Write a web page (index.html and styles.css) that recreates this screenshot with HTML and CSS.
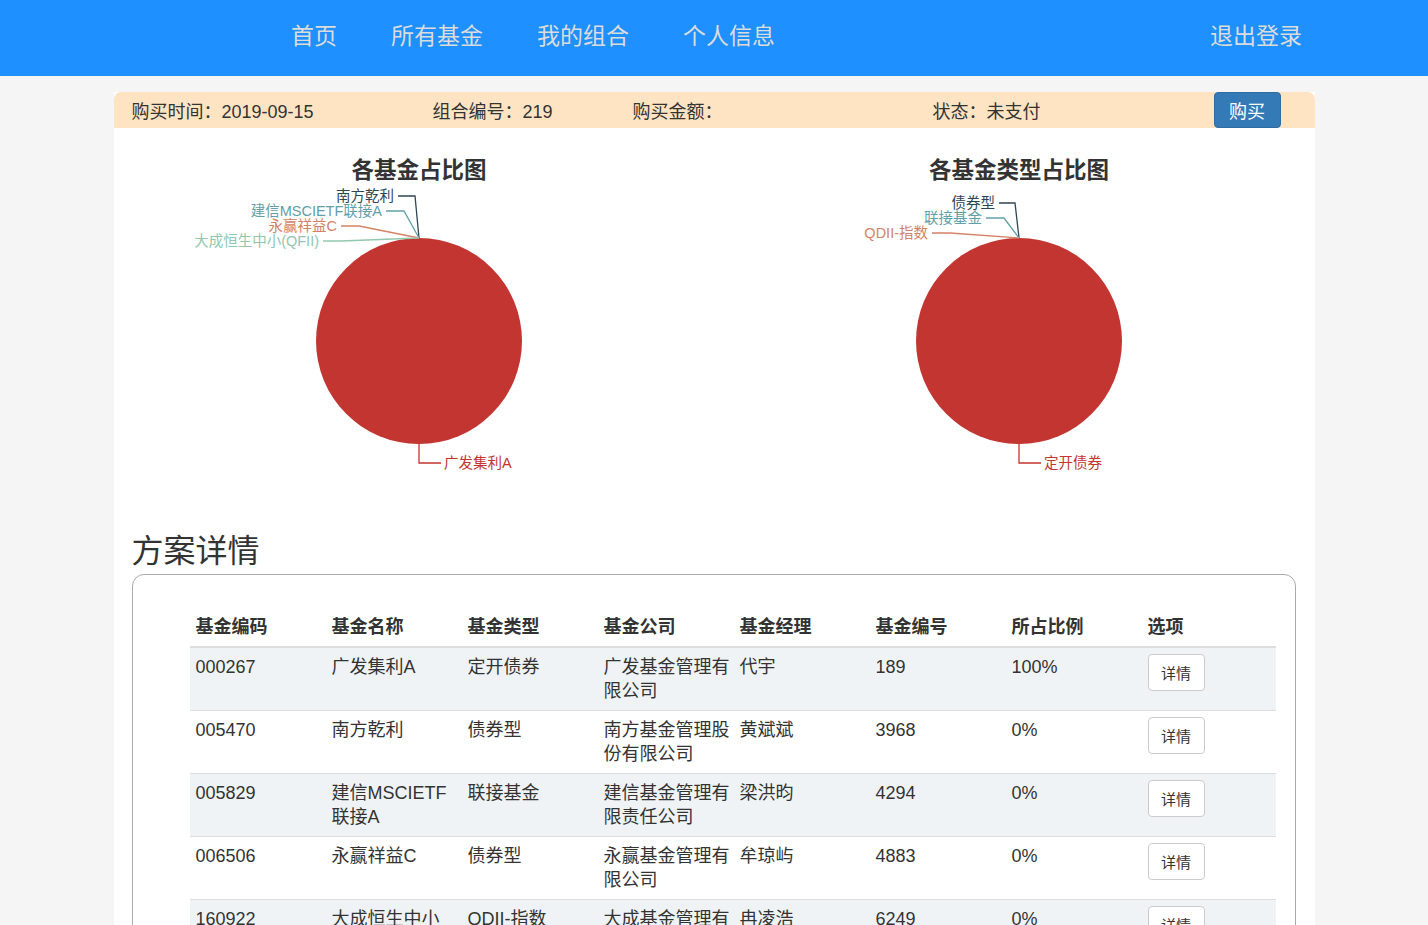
FILE: index.html
```html
<!DOCTYPE html>
<html lang="zh-CN">
<head>
<meta charset="utf-8">
<title>我的组合</title>
<link rel="stylesheet" href="styles.css">
</head>
<body>
<nav class="topnav">
  <ul class="nav-links">
    <li><a href="#">首页</a></li>
    <li><a href="#">所有基金</a></li>
    <li><a href="#">我的组合</a></li>
    <li><a href="#">个人信息</a></li>
  </ul>
  <a class="logout" href="#">退出登录</a>
</nav>

<main class="page">
  <div class="info-bar">
    <span>购买时间：2019-09-15</span>
    <span>组合编号：219</span>
    <span>购买金额：</span>
    <span>状态：未支付</span>
    <button class="buy-btn">购买</button>
  </div>

  <section class="charts">
    <svg class="chart" width="600" height="400" viewBox="0 0 600 400">
      <text class="chart-title" x="300" y="50" text-anchor="middle">各基金占比图</text>
      <circle cx="300" cy="213" r="103" fill="#c23531"/>
      <polyline class="lbl-line" points="279,68 296,68 300,110" stroke="#2f4554"/>
      <polyline class="lbl-line" points="267,83 285,83 300,110" stroke="#61a0a8"/>
      <polyline class="lbl-line" points="222,98 240,98 300,110" stroke="#d48265"/>
      <polyline class="lbl-line" points="204,113 222,113 300,110" stroke="#91c7ae"/>
      <polyline class="lbl-line" points="300,316 300,335 322,335" stroke="#c23531"/>
      <text class="lbl" x="275" y="68" text-anchor="end" fill="#2f4554">南方乾利</text>
      <text class="lbl" x="263" y="83" text-anchor="end" fill="#61a0a8">建信MSCIETF联接A</text>
      <text class="lbl" x="218" y="98" text-anchor="end" fill="#d48265">永赢祥益C</text>
      <text class="lbl" x="200" y="113" text-anchor="end" fill="#91c7ae">大成恒生中小(QFII)</text>
      <text class="lbl" x="325" y="335" fill="#c23531">广发集利A</text>
    </svg>
    <svg class="chart" width="600" height="400" viewBox="0 0 600 400">
      <text class="chart-title" x="300" y="50" text-anchor="middle">各基金类型占比图</text>
      <circle cx="300" cy="213" r="103" fill="#c23531"/>
      <polyline class="lbl-line" points="280,75 296,75 300,110" stroke="#2f4554"/>
      <polyline class="lbl-line" points="267,90 285,90 300,110" stroke="#61a0a8"/>
      <polyline class="lbl-line" points="213,105 231,105 300,110" stroke="#d48265"/>
      <polyline class="lbl-line" points="300,316 300,335 322,335" stroke="#c23531"/>
      <text class="lbl" x="276" y="75" text-anchor="end" fill="#2f4554">债券型</text>
      <text class="lbl" x="263" y="90" text-anchor="end" fill="#61a0a8">联接基金</text>
      <text class="lbl" x="209" y="105" text-anchor="end" fill="#d48265">QDII-指数</text>
      <text class="lbl" x="325" y="335" fill="#c23531">定开债券</text>
    </svg>
  </section>

  <h2 class="section-title">方案详情</h2>

  <div class="table-panel">
    <table class="fund-table">
      <thead>
        <tr>
          <th>基金编码</th><th>基金名称</th><th>基金类型</th><th>基金公司</th><th>基金经理</th><th>基金编号</th><th>所占比例</th><th>选项</th>
        </tr>
      </thead>
      <tbody>
        <tr>
          <td>000267</td><td>广发集利A</td><td>定开债券</td><td>广发基金管理有限公司</td><td>代宇</td><td>189</td><td>100%</td><td><button class="detail-btn">详情</button></td>
        </tr>
        <tr>
          <td>005470</td><td>南方乾利</td><td>债券型</td><td>南方基金管理股份有限公司</td><td>黄斌斌</td><td>3968</td><td>0%</td><td><button class="detail-btn">详情</button></td>
        </tr>
        <tr>
          <td>005829</td><td>建信MSCIETF联接A</td><td>联接基金</td><td>建信基金管理有限责任公司</td><td>梁洪昀</td><td>4294</td><td>0%</td><td><button class="detail-btn">详情</button></td>
        </tr>
        <tr>
          <td>006506</td><td>永赢祥益C</td><td>债券型</td><td>永赢基金管理有限公司</td><td>牟琼屿</td><td>4883</td><td>0%</td><td><button class="detail-btn">详情</button></td>
        </tr>
        <tr>
          <td>160922</td><td>大成恒生中小(QFII)</td><td>QDII-指数</td><td>大成基金管理有限公司</td><td>冉凌浩</td><td>6249</td><td>0%</td><td><button class="detail-btn">详情</button></td>
        </tr>
      </tbody>
    </table>
  </div>
</main>
</body>
</html>
```

FILE: styles.css
```css
* { box-sizing: border-box; }

body {
  margin: 0;
  background: #f5f5f5;
  font-family: "Liberation Sans", "Noto Sans CJK SC", sans-serif;
  color: #333;
}

.topnav {
  height: 76px;
  background: #1e90ff;
  display: flex;
  align-items: center;
  padding: 0 126px 4px 291px;
}

.nav-links {
  list-style: none;
  margin: 0;
  padding: 0;
  display: flex;
  gap: 54px;
}

.topnav a {
  color: #dcdcdc;
  text-decoration: none;
  font-size: 23px;
  line-height: 30px;
}

.logout { margin-left: auto; }

.page {
  width: 1201px;
  margin: 16px auto 0;
  background: #fff;
  padding-bottom: 40px;
}

.info-bar {
  height: 36px;
  background: #ffe4c4;
  border-radius: 7px 7px 0 0;
  display: grid;
  grid-template-columns: 301px 200px 300px 1fr auto;
  align-items: center;
  padding: 0 34px 1px 18px;
  font-size: 18px;
}

.buy-btn {
  height: 36px;
  width: 67px;
  border: 1px solid #2e6da4;
  border-radius: 4px;
  background: #337ab7;
  color: #fff;
  font-family: inherit;
  font-size: 18px;
  padding: 0;
  align-self: start;
}

.charts {
  display: flex;
  height: 400px;
  padding-left: 5px;
}

.chart {
  display: block;
  flex-shrink: 0;
  overflow: visible;
}

.chart-title {
  font-size: 22.5px;
  font-weight: bold;
  fill: #333;
  font-family: "Liberation Sans", "Noto Sans CJK SC", sans-serif;
}

.lbl {
  font-size: 14.5px;
  dominant-baseline: central;
  font-family: "Liberation Sans", "Noto Sans CJK SC", sans-serif;
}

.lbl-line {
  fill: none;
  stroke-width: 1.3;
}

.section-title {
  margin: 6px 0 5px 18px;
  font-size: 32px;
  line-height: 35px;
  font-weight: normal;
  color: #333;
}

.table-panel {
  margin: 0 19px 0 18px;
  border: 1px solid #aaa;
  border-radius: 12px;
  padding: 33px 19px 20px 57px;
}

.fund-table {
  width: 100%;
  border-collapse: collapse;
  table-layout: fixed;
  font-size: 18px;
}

.fund-table th,
.fund-table td {
  width: 136px;
  text-align: left;
  vertical-align: top;
  padding: 7px 3px 7px 6px;
  line-height: 24px;
}

.fund-table th:last-child,
.fund-table td:last-child { width: auto; }

.fund-table th {
  font-weight: bold;
  border-bottom: 2px solid #ddd;
}

.fund-table td { border-top: 1px solid #ddd; }

.fund-table tbody tr:nth-child(odd) { background: #f0f3f6; }

.detail-btn {
  width: 57px;
  height: 37px;
  margin-top: -1px;
  border: 1px solid #ccc;
  border-radius: 4px;
  background: #fff;
  color: #333;
  font-family: inherit;
  font-size: 15px;
  padding: 0;
}
```
